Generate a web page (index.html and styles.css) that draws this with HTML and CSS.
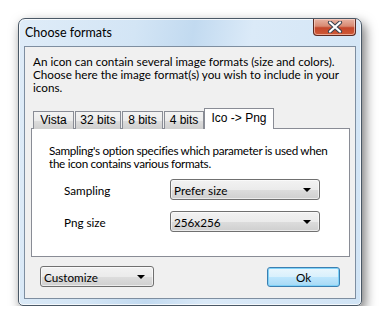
FILE: index.html
```html
<!DOCTYPE html>
<html>
<head>
<meta charset="utf-8">
<link rel="stylesheet" href="styles.css">
</head>
<body>
<div class="window">
  <div class="titlebar">
    <span class="title">Choose formats</span>
    <div class="close">
      <svg width="18" height="12" viewBox="0 0 18 12">
        <path d="M4 1.5 L14 10.5 M14 1.5 L4 10.5" stroke="#3a4350" stroke-width="4.2" stroke-linecap="round"/>
        <path d="M4 1.5 L14 10.5 M14 1.5 L4 10.5" stroke="#ffffff" stroke-width="2.2" stroke-linecap="round"/>
      </svg>
    </div>
  </div>
  <div class="client">
    <p class="intro">An icon can contain several image formats (size and colors).<br>Choose here the image format(s) you wish to include in your<br>icons.</p>
    <div class="tabs">
      <div class="tab t1">Vista</div>
      <div class="tab t2">32 bits</div>
      <div class="tab t3">8 bits</div>
      <div class="tab t4">4 bits</div>
      <div class="tab active">Ico -&gt; Png</div>
    </div>
    <div class="panel">
      <p class="desc">Sampling's option specifies which parameter is used when<br>the icon contains various formats.</p>
      <div class="row">
        <span class="label">Sampling</span>
        <div class="combo wide"><span>Prefer size</span><i class="arrow"></i></div>
      </div>
      <div class="row">
        <span class="label">Png size</span>
        <div class="combo wide"><span>256x256</span><i class="arrow"></i></div>
      </div>
    </div>
    <div class="footer">
      <div class="combo small"><span>Customize</span><i class="arrow"></i></div>
      <div class="button">Ok</div>
    </div>
  </div>
</div>
</body>
</html>
```
FILE: styles.css
```css
html, body {
  margin: 0;
  padding: 0;
  background: #ffffff;
}
body {
  font-family: "Lato", "Noto Sans", sans-serif;
  font-size: 11.7px;
  color: #000;
}
.window {
  margin: 18px 0 0 18px;
  width: 344px;
  height: 288px;
  box-sizing: border-box;
  border: 1px solid #4a5866;
  border-radius: 7px 7px 5px 5px;
  background: linear-gradient(100deg, #dfecf8 0%, #d3e5f5 30%, #c2daf0 45%, #dbeaf8 60%, #d1e4f5 100%);
  box-shadow: 3px 5px 12px rgba(0,0,0,0.55), inset 0 0 0 1px rgba(255,255,255,0.75);
  padding: 0 5px 6px 5px;
  display: flex;
  flex-direction: column;
  overflow: hidden;
}
.titlebar {
  height: 27px;
  display: flex;
  align-items: flex-start;
  justify-content: space-between;
  flex-shrink: 0;
}
.title {
  font-size: 12.5px;
  padding: 6px 0 0 1px;
  white-space: nowrap;
}
.close {
  width: 43px;
  height: 17px;
  box-sizing: border-box;
  border: 1px solid #5b2a22;
  border-top: none;
  border-radius: 0 0 4px 4px;
  background: linear-gradient(180deg, #e8b3a3 0%, #d88a72 45%, #c4472c 55%, #cf5a36 100%);
  box-shadow: inset 0 0 0 1px rgba(255,220,210,0.6);
  display: flex;
  align-items: center;
  justify-content: center;
}
.close svg { display: block; }
.client {
  flex: 1;
  min-height: 0;
  background: #f0f0f0;
  border: 1px solid #7e8ea0;
  padding: 8px 5px 0 6px;
  display: flex;
  flex-direction: column;
}
.intro {
  margin: 0;
  padding-left: 2px;
  line-height: 13px;
  white-space: nowrap;
}
.tabs {
  display: flex;
  align-items: flex-end;
  margin-top: 14px;
  padding-left: 2px;
  height: 21px;
  position: relative;
  z-index: 1;
  margin-bottom: -1px;
}
.tab {
  font-family: "Liberation Sans", sans-serif;
  font-size: 12px;
  height: 18px;
  box-sizing: border-box;
  border: 1px solid #898c95;
  border-bottom: none;
  margin-right: 1px;
  line-height: 17px;
  text-align: center;
  background: linear-gradient(180deg, #f3f3f3 0%, #ebebeb 50%, #dddddd 51%, #cfcfcf 100%);
  white-space: nowrap;
}
.t1 { width: 41px; }
.t2 { width: 46px; }
.t3 { width: 41px; }
.t4 { width: 40px; }
.tab.active {
  width: 70px;
  height: 21px;
  background: #ffffff;
  margin-left: -1px;
  line-height: 19px;
}
.panel {
  background: #ffffff;
  border: 1px solid #898c95;
  height: 129px;
  box-sizing: border-box;
  padding: 15px 18px 0 17px;
  flex-shrink: 0;
}
.desc {
  margin: 0;
  line-height: 13px;
  white-space: nowrap;
  letter-spacing: -0.3px;
}
.row {
  display: flex;
  align-items: center;
  margin-top: 9px;
}
.row + .row { margin-top: 11px; }
.label {
  padding-left: 15px;
  flex-shrink: 0;
  box-sizing: border-box;
  width: 121px;
}
.combo {
  height: 21px;
  box-sizing: border-box;
  border: 1px solid #707070;
  border-radius: 3px;
  background: linear-gradient(180deg, #f2f2f2 0%, #ebebeb 50%, #dddddd 51%, #cfcfcf 100%);
  box-shadow: inset 0 0 0 1px rgba(255,255,255,0.6);
  display: flex;
  align-items: center;
  justify-content: space-between;
  padding: 0 8px 0 3px;
}
.combo.wide { width: 150px; }
.combo.small { width: 114px; }
.arrow {
  width: 0;
  height: 0;
  border-left: 4px solid transparent;
  border-right: 4px solid transparent;
  border-top: 4px solid #000;
  margin-top: 1px;
}
.footer {
  display: flex;
  justify-content: space-between;
  align-items: center;
  padding: 9px 10px 0 9px;
}
.button {
  width: 73px;
  height: 20px;
  box-sizing: border-box;
  border: 1px solid #3c7fb1;
  border-radius: 3px;
  background: linear-gradient(180deg, #eaf6fd 0%, #d9f0fc 50%, #bee6fd 51%, #a7d9f5 100%);
  box-shadow: inset 0 0 0 1px #7fd2f8;
  text-align: center;
  line-height: 18px;
}
```
